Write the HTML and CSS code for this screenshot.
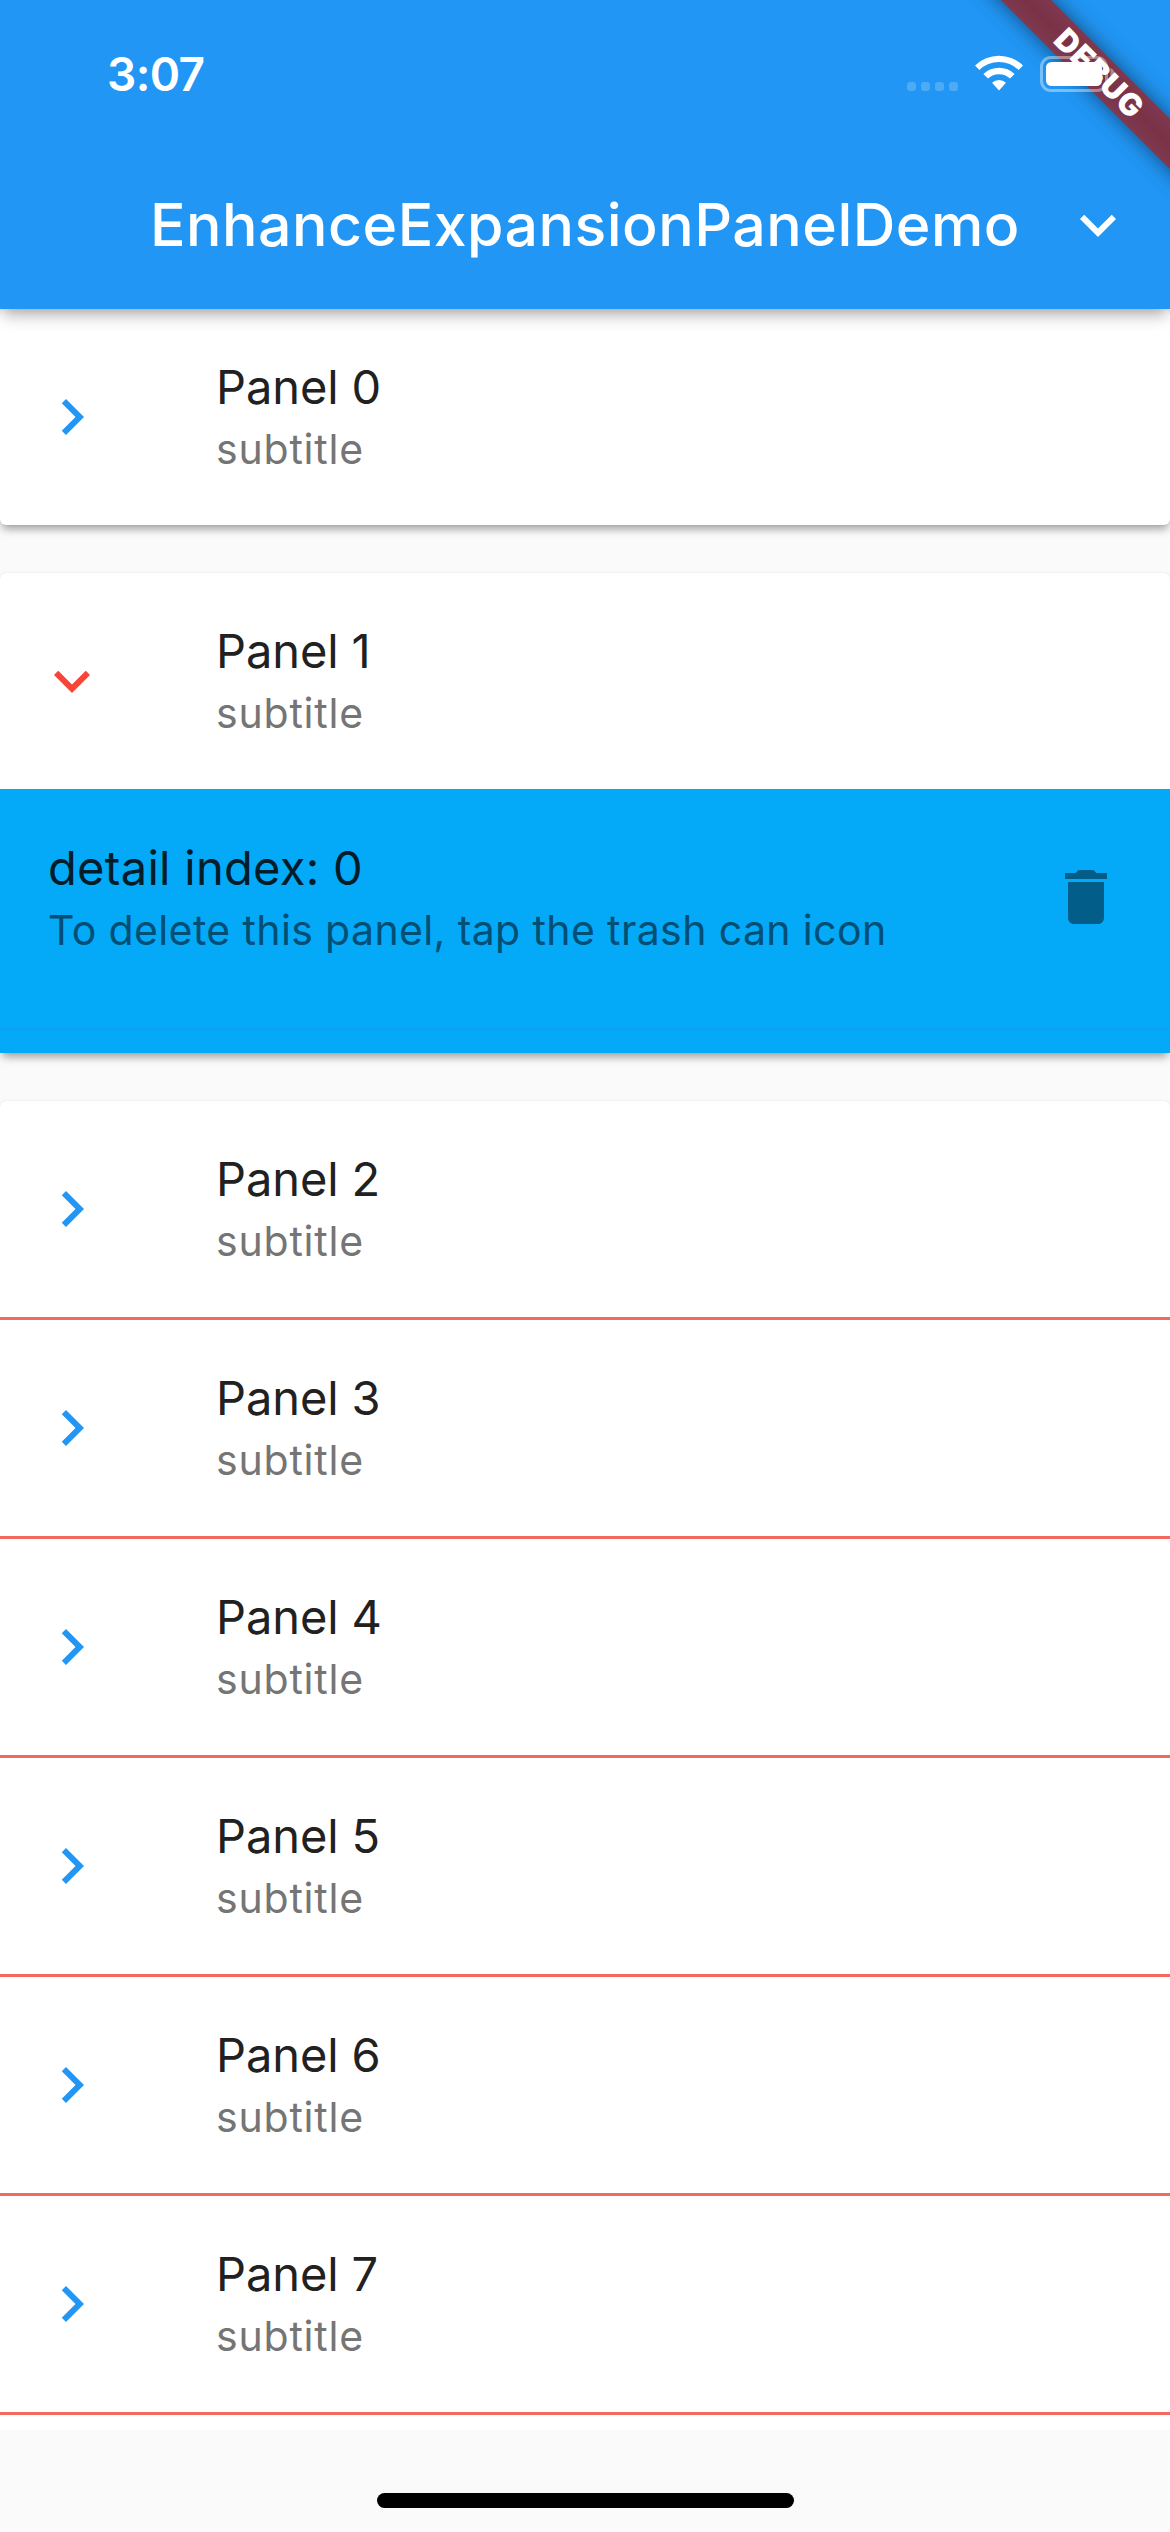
FILE: index.html
```
<!DOCTYPE html>
<html lang="en">
<head>
<meta charset="utf-8">
<title>EnhanceExpansionPanelDemo</title>
<link rel="stylesheet" href="styles.css">
</head>
<body>
<svg class="defs" width="0" height="0">
  <symbol id="right" viewBox="0 0 24 24"><path d="M10 6 8.59 7.41 13.17 12l-4.58 4.59L10 18l6-6z"/></symbol>
  <symbol id="down" viewBox="0 0 24 24"><path d="M16.59 8.59 12 13.17 7.41 8.59 6 10l6 6 6-6z"/></symbol>
</svg>
<div class="app">
  <header class="appbar">
    <div class="status">
      <span class="time">3:07</span>
      <div class="indicators">
        <div class="dots"><i></i><i></i><i></i><i></i></div>
        <svg class="wifi" width="48" height="36" viewBox="0 0 48 36"><path d="M0 10.4A34.5 34.5 0 0 1 48 10.4L43.6 15A28 28 0 0 0 4.4 15ZM8.4 19A22.3 22.3 0 0 1 39.6 19L35 23.600A15.800 15.800 0 0 0 13 23.600ZM17 27.800A10.400 10.400 0 0 1 31 27.800L24 35.500Z"/></svg>
        <svg class="battery" width="76" height="36" viewBox="0 0 76 36"><rect class="shell" x="1.500" y="1.500" width="65" height="33" rx="9.500"/><rect x="6" y="6" width="56" height="24" rx="5.500"/><path class="tip" d="M70.500 12c5.500 2 5.500 10 0 12z"/></svg>
      </div>
    </div>
    <div class="toolbar">
      <h1 class="title">EnhanceExpansionPanelDemo</h1>
      <svg class="icon"><use href="#down"/></svg>
    </div>
    <div class="banner">DEBUG</div>
  </header>
  <main class="list">
    <section class="card">
      <div class="row"><svg class="icon"><use href="#right"/></svg><div class="text"><p class="name">Panel 0</p><p class="sub">subtitle</p></div></div>
    </section>
    <section class="card open">
      <div class="row"><svg class="icon"><use href="#down"/></svg><div class="text"><p class="name">Panel 1</p><p class="sub">subtitle</p></div></div>
      <div class="detail">
        <div class="detail-row"><div class="text"><p class="name detail-name">detail index: 0</p><p class="sub hint">To delete this panel, tap the trash can icon</p></div>
        <svg class="icon" viewBox="0 0 24 24"><path d="M6 19c0 1.100.9 2 2 2h8c1.100 0 2-.9 2-2V7H6v12zM19 4h-3.500l-1-1h-5l-1 1H5v2h14V4z"/></svg></div>
      </div>
    </section>
    <section class="card group">
      <div class="row"><svg class="icon"><use href="#right"/></svg><div class="text"><p class="name">Panel 2</p><p class="sub">subtitle</p></div></div>
      <div class="row"><svg class="icon"><use href="#right"/></svg><div class="text"><p class="name">Panel 3</p><p class="sub">subtitle</p></div></div>
      <div class="row"><svg class="icon"><use href="#right"/></svg><div class="text"><p class="name">Panel 4</p><p class="sub">subtitle</p></div></div>
      <div class="row"><svg class="icon"><use href="#right"/></svg><div class="text"><p class="name">Panel 5</p><p class="sub">subtitle</p></div></div>
      <div class="row"><svg class="icon"><use href="#right"/></svg><div class="text"><p class="name">Panel 6</p><p class="sub">subtitle</p></div></div>
      <div class="row"><svg class="icon"><use href="#right"/></svg><div class="text"><p class="name">Panel 7</p><p class="sub">subtitle</p></div></div>
    </section>
  </main>
  <footer class="home"><div class="home-bar"></div></footer>
</div>
</body>
</html>
```
FILE: styles.css
```
* { box-sizing: border-box; margin: 0; padding: 0; }
body { background: #fafafa; font-family: Inter, "Liberation Sans", sans-serif; }
.defs { display: block; }
.app { width: 1170px; height: 2532px; display: flex; flex-direction: column; overflow: hidden; position: relative; }
.icon { width: 72px; height: 72px; flex: none; fill: currentColor; }

.appbar {
  height: 309px; flex: none; position: relative; z-index: 2;
  background: #2196f4; color: #fff; fill: #fff;
  box-shadow: 0 9px 15px -3px rgba(0,0,0,.3), 0 3px 8px -3px rgba(0,0,0,.1);
}
.status { height: 141px; padding: 0 54px 0 107px; display: flex; justify-content: space-between; align-items: flex-start; position: relative; z-index: 2; }
.time { font-size: 46px; line-height: 56px; font-weight: 600; margin-top: 46px; letter-spacing: -.6px; }
.indicators { display: flex; margin-top: 55px; }
.dots { display: flex; gap: 5px; padding-top: 27px; margin-right: 17px; }
.dots i { width: 9px; height: 9px; border-radius: 3px; background: rgba(255,255,255,.2); }
.wifi { margin-right: 17px; }
.battery { margin-top: 1px; }
.shell { fill: none; stroke: #fff; stroke-width: 3; opacity: .4; }
.tip { opacity: .4; }
.toolbar { height: 168px; display: flex; align-items: center; justify-content: space-between; padding: 0 36px 0 150px; }
.title { font-size: 59px; line-height: 72px; font-weight: 500; letter-spacing: .48px; white-space: nowrap; }
.banner {
  position: absolute; left: 918px; top: 54px; width: 360px; height: 36px;
  transform: rotate(45deg);
  background: linear-gradient(#7e3950, #7a3247 50%, #7e3950);
  box-shadow: 0 0 20px rgba(0,0,0,.5);
  text-align: center; text-indent: 4px; font-size: 31px; line-height: 36px; font-weight: 900; letter-spacing: .8px;
}

.list { height: 2121px; flex: none; display: flex; flex-direction: column; gap: 48px; overflow: hidden; }
.card { background: #fff; border-radius: 6px; flex: none; box-shadow: 0 6px 9px -2px rgba(0,0,0,.36), 0 0 2px rgba(0,0,0,.1); }
.row { height: 216px; display: flex; align-items: center; padding-left: 36px; color: #2196f4; }
.open .row { color: #f94438; }
.row .text { margin-left: 108px; }
.text { padding-top: 2px; }
.name { color: #212121; font-size: 47px; line-height: 62px; letter-spacing: -.1px; }
.sub { color: #757575; font-size: 41px; line-height: 62px; letter-spacing: .8px; }
.detail { background: #04a9f8; height: 264px; }
.detail-row { height: 241px; padding: 0 48px; display: flex; align-items: center; justify-content: space-between; color: rgba(0,0,0,.45); border-bottom: 2px solid #10a0f2; }
.detail-row .text { padding-bottom: 22px; }
.detail-row .icon { margin-bottom: 23px; }
.detail-name { color: #021c28; letter-spacing: .3px; }
.hint { color: #014f74; white-space: nowrap; letter-spacing: .38px; }
.group { height: 1400px; }
.group .row { height: 219px; border-bottom: 3px solid #f3695f; }

.home { height: 102px; display: flex; justify-content: center; padding-top: 63px; background: #fafafa; }
.home-bar { width: 417px; height: 15px; border-radius: 8px; background: #000; }
```
